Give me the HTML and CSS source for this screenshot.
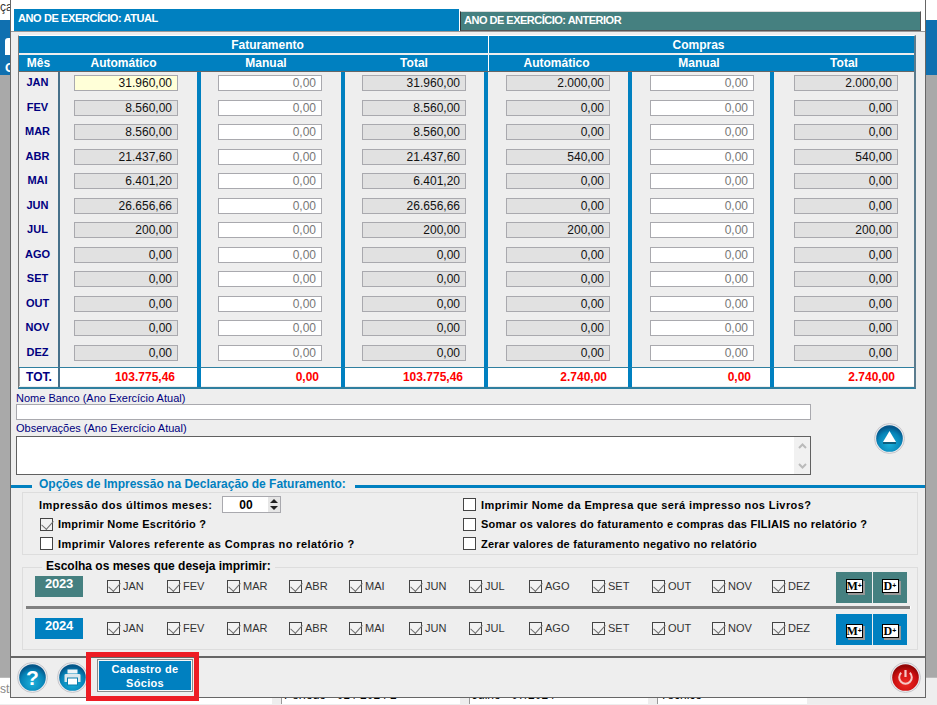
FILE: index.html
```html
<!DOCTYPE html>
<html lang="pt-BR">
<head>
<meta charset="utf-8">
<title>Declaração de Faturamento</title>
<link rel="stylesheet" href="styles.css">
</head>
<body>
<div class="desk">
  <div class="d-white">ça</div>
  <div class="d-blue"><span class="d-user"></span><span class="d-g">G</span></div>
  <div class="d-right"></div>
  <div class="d-bottom">
    <div class="d-left">str</div>
    <div class="d-f f1">Período - 01 / 2024 2</div>
    <div class="d-f f2">Julho - 07/2024</div>
    <div class="d-f f3">Técnico</div>
  </div>
</div>

<main class="win">
  <div class="tabs">
    <div class="tab-a">ANO DE EXERCÍCIO: ATUAL</div>
    <div class="tab-b">ANO DE EXERCÍCIO: ANTERIOR</div>
  </div>

  <section class="frame">
    <div class="hd1">
      <div class="hf">Faturamento</div>
      <div class="hc">Compras</div>
    </div>
    <div class="hd2">
      <div>Mês</div><div class="h2">Automático</div><div class="h3">Manual</div><div class="h4">Total</div><div class="h5">Automático</div><div class="h6">Manual</div><div class="h7">Total</div>
    </div>
    <div class="grid">
      <div class="mes">JAN</div><div class="cell c2"><div class="fld yl">31.960,00</div></div><div class="cell c3"><div class="fld ed">0,00</div></div><div class="cell c4"><div class="fld">31.960,00</div></div><div class="cell c5"><div class="fld">2.000,00</div></div><div class="cell c6"><div class="fld ed">0,00</div></div><div class="cell c7"><div class="fld">2.000,00</div></div>
      <div class="mes">FEV</div><div class="cell c2"><div class="fld">8.560,00</div></div><div class="cell c3"><div class="fld ed">0,00</div></div><div class="cell c4"><div class="fld">8.560,00</div></div><div class="cell c5"><div class="fld">0,00</div></div><div class="cell c6"><div class="fld ed">0,00</div></div><div class="cell c7"><div class="fld">0,00</div></div>
      <div class="mes">MAR</div><div class="cell c2"><div class="fld">8.560,00</div></div><div class="cell c3"><div class="fld ed">0,00</div></div><div class="cell c4"><div class="fld">8.560,00</div></div><div class="cell c5"><div class="fld">0,00</div></div><div class="cell c6"><div class="fld ed">0,00</div></div><div class="cell c7"><div class="fld">0,00</div></div>
      <div class="mes">ABR</div><div class="cell c2"><div class="fld">21.437,60</div></div><div class="cell c3"><div class="fld ed">0,00</div></div><div class="cell c4"><div class="fld">21.437,60</div></div><div class="cell c5"><div class="fld">540,00</div></div><div class="cell c6"><div class="fld ed">0,00</div></div><div class="cell c7"><div class="fld">540,00</div></div>
      <div class="mes">MAI</div><div class="cell c2"><div class="fld">6.401,20</div></div><div class="cell c3"><div class="fld ed">0,00</div></div><div class="cell c4"><div class="fld">6.401,20</div></div><div class="cell c5"><div class="fld">0,00</div></div><div class="cell c6"><div class="fld ed">0,00</div></div><div class="cell c7"><div class="fld">0,00</div></div>
      <div class="mes">JUN</div><div class="cell c2"><div class="fld">26.656,66</div></div><div class="cell c3"><div class="fld ed">0,00</div></div><div class="cell c4"><div class="fld">26.656,66</div></div><div class="cell c5"><div class="fld">0,00</div></div><div class="cell c6"><div class="fld ed">0,00</div></div><div class="cell c7"><div class="fld">0,00</div></div>
      <div class="mes">JUL</div><div class="cell c2"><div class="fld">200,00</div></div><div class="cell c3"><div class="fld ed">0,00</div></div><div class="cell c4"><div class="fld">200,00</div></div><div class="cell c5"><div class="fld">200,00</div></div><div class="cell c6"><div class="fld ed">0,00</div></div><div class="cell c7"><div class="fld">200,00</div></div>
      <div class="mes">AGO</div><div class="cell c2"><div class="fld">0,00</div></div><div class="cell c3"><div class="fld ed">0,00</div></div><div class="cell c4"><div class="fld">0,00</div></div><div class="cell c5"><div class="fld">0,00</div></div><div class="cell c6"><div class="fld ed">0,00</div></div><div class="cell c7"><div class="fld">0,00</div></div>
      <div class="mes">SET</div><div class="cell c2"><div class="fld">0,00</div></div><div class="cell c3"><div class="fld ed">0,00</div></div><div class="cell c4"><div class="fld">0,00</div></div><div class="cell c5"><div class="fld">0,00</div></div><div class="cell c6"><div class="fld ed">0,00</div></div><div class="cell c7"><div class="fld">0,00</div></div>
      <div class="mes">OUT</div><div class="cell c2"><div class="fld">0,00</div></div><div class="cell c3"><div class="fld ed">0,00</div></div><div class="cell c4"><div class="fld">0,00</div></div><div class="cell c5"><div class="fld">0,00</div></div><div class="cell c6"><div class="fld ed">0,00</div></div><div class="cell c7"><div class="fld">0,00</div></div>
      <div class="mes">NOV</div><div class="cell c2"><div class="fld">0,00</div></div><div class="cell c3"><div class="fld ed">0,00</div></div><div class="cell c4"><div class="fld">0,00</div></div><div class="cell c5"><div class="fld">0,00</div></div><div class="cell c6"><div class="fld ed">0,00</div></div><div class="cell c7"><div class="fld">0,00</div></div>
      <div class="mes">DEZ</div><div class="cell c2"><div class="fld">0,00</div></div><div class="cell c3"><div class="fld ed">0,00</div></div><div class="cell c4"><div class="fld">0,00</div></div><div class="cell c5"><div class="fld">0,00</div></div><div class="cell c6"><div class="fld ed">0,00</div></div><div class="cell c7"><div class="fld">0,00</div></div>
    </div>
    <div class="grid totals">
      <div class="mes tot"><span>TOT.</span></div>
      <div class="cell c2"><div class="tv">103.775,46</div></div><div class="cell c3"><div class="tv">0,00</div></div><div class="cell c4"><div class="tv">103.775,46</div></div><div class="cell c5"><div class="tv">2.740,00</div></div><div class="cell c6"><div class="tv">0,00</div></div><div class="cell c7"><div class="tv">2.740,00</div></div>
    </div>
  </section>

  <section class="notes">
    <div class="notes-l">
      <div class="lbl">Nome Banco (Ano Exercício Atual)</div>
      <div class="line"></div>
      <div class="lbl lbl2">Observações (Ano Exercício Atual)</div>
      <div class="area">
        <div class="sb">
          <svg width="9" height="6" viewBox="0 0 9 6"><path d="M1 5 L4.5 1.5 L8 5" fill="none" stroke="#bbb" stroke-width="2"/></svg>
          <svg width="9" height="6" viewBox="0 0 9 6"><path d="M1 1 L4.5 4.5 L8 1" fill="none" stroke="#bbb" stroke-width="2"/></svg>
        </div>
      </div>
    </div>
    <svg class="round up" width="31" height="31" viewBox="0 0 31 31">
      <defs><radialGradient id="gb" cx="50%" cy="70%" r="62%"><stop offset="0" stop-color="#1cb0da"/><stop offset="0.7" stop-color="#0684b8"/><stop offset="1" stop-color="#04578a"/></radialGradient></defs>
      <circle cx="15.5" cy="15.5" r="15" fill="#e8e8ec" stroke="#c8c8cc"/>
      <circle cx="15.5" cy="15.5" r="13.3" fill="url(#gb)"/>
      <path d="M15.5 8 L22 19 H9 Z" fill="#fff"/>
      <rect x="9" y="19" width="13" height="2" fill="#0c5f80"/>
    </svg>
  </section>

  <div class="opt-head"><span class="rule r1"></span><h2>Opções de Impressão na Declaração de Faturamento:</h2><span class="rule r2"></span></div>

  <section class="opts">
    <div class="opt lm">Impressão dos últimos meses:<div class="spin"><span>00</span><i class="arrows"></i></div></div>
    <label class="opt rt wide"><i class="ck"></i>Imprimir Nome da Empresa que será impresso nos Livros?</label>
    <label class="opt"><i class="ck on"></i>Imprimir Nome Escritório ?</label>
    <label class="opt rt"><i class="ck"></i>Somar os valores do faturamento e compras das FILIAIS no relatório ?</label>
    <label class="opt wide"><i class="ck"></i>Imprimir Valores referente as Compras no relatório ?</label>
    <label class="opt rt"><i class="ck"></i>Zerar valores de faturamento negativo no relatório</label>
  </section>

  <section class="group">
    <div class="g-legend">Escolha os meses que deseja imprimir:</div>
    <div class="yr y1">
      <div class="chip teal">2023</div>
      <div class="months">
        <label class="m"><i class="ck on"></i>JAN</label><label class="m"><i class="ck on"></i>FEV</label><label class="m w"><i class="ck on"></i>MAR</label><label class="m"><i class="ck on"></i>ABR</label><label class="m"><i class="ck on"></i>MAI</label><label class="m"><i class="ck on"></i>JUN</label><label class="m"><i class="ck on"></i>JUL</label><label class="m x"><i class="ck on"></i>AGO</label><label class="m"><i class="ck on"></i>SET</label><label class="m"><i class="ck on"></i>OUT</label><label class="m"><i class="ck on"></i>NOV</label><label class="m"><i class="ck on"></i>DEZ</label>
      </div>
      <div class="mbtns"><div class="mb teal"><span class="mi">M<b>+</b></span></div><div class="mb teal"><span class="mi d">D<b>+</b></span></div></div>
    </div>
    <div class="sep"></div>
    <div class="yr y2">
      <div class="chip blue">2024</div>
      <div class="months">
        <label class="m"><i class="ck on"></i>JAN</label><label class="m"><i class="ck on"></i>FEV</label><label class="m w"><i class="ck on"></i>MAR</label><label class="m"><i class="ck on"></i>ABR</label><label class="m"><i class="ck on"></i>MAI</label><label class="m"><i class="ck on"></i>JUN</label><label class="m"><i class="ck on"></i>JUL</label><label class="m x"><i class="ck on"></i>AGO</label><label class="m"><i class="ck on"></i>SET</label><label class="m"><i class="ck on"></i>OUT</label><label class="m"><i class="ck on"></i>NOV</label><label class="m"><i class="ck on"></i>DEZ</label>
      </div>
      <div class="mbtns"><div class="mb blue"><span class="mi">M<b>+</b></span></div><div class="mb blue"><span class="mi d">D<b>+</b></span></div></div>
    </div>
  </section>

  <footer class="foot">
    <div class="round hlp">
      <svg width="31" height="31" viewBox="0 0 31 31">
        <circle cx="15.5" cy="15.5" r="15" fill="#e8e8ec" stroke="#c8c8cc"/>
        <circle cx="15.5" cy="15.5" r="13.3" fill="url(#gb)"/>
      </svg>
      <span>?</span>
    </div>
    <svg class="round prn" width="31" height="31" viewBox="0 0 31 31">
      <circle cx="15.5" cy="15.5" r="15" fill="#e8e8ec" stroke="#c8c8cc"/>
      <circle cx="15.5" cy="15.5" r="13.3" fill="url(#gb)"/>
      <rect x="10.5" y="7.5" width="10" height="4" fill="#eef4f7"/>
      <path d="M7.5 13 Q7.5 12 9 12 H22 Q23.5 12 23.5 13 V20 H7.5 Z" fill="#dbe7ec"/>
      <rect x="10.5" y="16" width="10" height="7" fill="#fff" stroke="#0a7fae"/>
    </svg>
    <button class="socios" type="button">Cadastro de<br>Sócios</button>
    <svg class="round pwr" width="31" height="31" viewBox="0 0 31 31">
      <defs><radialGradient id="gr" cx="50%" cy="70%" r="62%"><stop offset="0" stop-color="#ee2a24"/><stop offset="0.7" stop-color="#cc0f10"/><stop offset="1" stop-color="#950606"/></radialGradient></defs>
      <circle cx="15.5" cy="15.5" r="15" fill="#e8e8ec" stroke="#c8c8cc"/>
      <circle cx="15.5" cy="15.5" r="13.3" fill="url(#gr)"/>
      <path d="M11.2 10.8 A6.3 6.3 0 1 0 19.8 10.8" fill="none" stroke="#f6c9c6" stroke-width="2"/>
      <path d="M15.5 8 V15" stroke="#f6c9c6" stroke-width="2.2"/>
    </svg>
  </footer>
</main>
<div class="marker"></div>
</body>
</html>
```
FILE: styles.css
```css
* { box-sizing: border-box; }
html, body { margin: 0; padding: 0; }
body {
  position: relative;
  width: 937px;
  height: 705px;
  overflow: hidden;
  background: #a9a9a9;
  font-family: "Liberation Sans", Arial, sans-serif;
  font-size: 11px;
  color: #000;
}

/* Desktop behind the dialog */
.desk { position: absolute; inset: 0; }
.d-white { position: absolute; left: 0; top: 0; width: 12px; height: 20px; background: #fff; color: #333; font-size: 12px; line-height: 15px; white-space: nowrap; overflow: hidden; }
.d-blue { position: absolute; left: 0; top: 20px; width: 937px; height: 55px; background: #1070b0; }
.d-user { position: absolute; left: 5px; top: 18px; width: 8px; height: 17px; background: #fff; border-radius: 3px 0 0 0; }
.d-g { position: absolute; left: 5px; top: 41px; color: #fff; font-size: 13px; font-weight: bold; line-height: 14px; }
.d-right { position: absolute; left: 925px; top: 0; width: 12px; height: 20px; background: #fff; }
.d-bottom { position: absolute; left: 0; top: 677px; width: 937px; height: 28px; background: #eee; border-top: 1px solid #bbb; }
.d-left { position: absolute; left: 0; top: 0; width: 272px; height: 26px; background: #fff; color: #888; font-size: 12px; line-height: 22px; }
.d-f { position: absolute; top: 10px; height: 16px; background: #fff; border-left: 1px solid #999; padding-left: 2px; font-size: 12px; line-height: 14px; }
.f1 { left: 281px; width: 179px; }
.f2 { left: 469px; width: 179px; }
.f3 { left: 657px; width: 150px; }

/* Dialog window */
.win {
  position: absolute;
  left: 10px;
  top: 0;
  width: 916px;
  height: 698px;
  display: flex;
  flex-direction: column;
  background: #eee;
  border: 1px solid #666;
  border-top: 0;
}
.tabs { display: flex; align-items: flex-start; height: 32px; padding: 9px 0 0 3px; background: #fff; border-bottom: 1px solid #999; flex: none; }
.tab-a { width: 445px; height: 22px; background: #0080c0; color: #fff; font-weight: bold; font-size: 11px; letter-spacing: -0.4px; line-height: 19px; padding-left: 4px; }
.tab-b { width: 461px; height: 20px; margin: 2px 0 0 1px; background: #458080; color: #fff; font-weight: bold; font-size: 11px; letter-spacing: -0.5px; line-height: 17px; padding-left: 3px; border: 1px solid; border-color: #ddd #555 #555 #333; }

/* Table */
.frame { width: 898px; margin: 3px 0 0 7px; flex: none; border-left: 1px solid #777; border-right: 2px solid #5b7c8e; border-bottom: 2px solid #2f7f9f; border-top: 1px solid #fff; }
.hd1, .hd2 { display: flex; color: #fff; font-size: 12px; font-weight: bold; background: #0080c0; }
.hd1 { height: 19px; line-height: 18px; border-bottom: 2px solid #eee; }
.hd2 { height: 17px; line-height: 17px; border-bottom: 1px solid #666; }
.hf { width: 470px; border-right: 1px solid #fff; text-align: center; padding-left: 28px; }
.hc { flex: 1; text-align: center; padding-right: 6px; }
.hd2 > div { text-align: center; flex: none; }
.hd2 > div:nth-child(1) { width: 41px; padding-right: 2px; }
.h2 { width: 137px; padding-right: 10px; }
.h3 { width: 144px; padding-right: 6px; }
.h4 { width: 148px; border-right: 1px solid #fff; padding-right: 1px; }
.h5 { width: 139px; padding-right: 4px; }
.h6 { width: 142px; }
.h7 { width: 144px; padding-left: 4px; }

.grid { display: grid; grid-template-columns: 41px 137px 144px 143px 144px 142px 144px; grid-auto-rows: 24.55px; }
.totals { grid-auto-rows: 20.4px; }
.mes { border-right: 2px solid #46708a; color: #000080; font-weight: bold; font-size: 11px; line-height: 12px; text-align: center; padding: 4px 2px 0 0; background: #eee; }
.cell { padding-top: 3px; background: #eee; }
.c2 { padding-left: 14px; }
.c3, .c4 { border-left: 4px solid #0080c0; padding-left: 17px; }
.c5, .c6 { border-left: 4px solid #0080c0; padding-left: 18px; }
.c7 { border-left: 4px solid #0080c0; padding-left: 20px; }
.fld { width: 104px; height: 16px; background: #e1e1e1; border: 1px solid #a9a9ae; font-size: 12px; line-height: 14px; text-align: right; padding-right: 5px; color: #111; }
.fld.ed { background: #fff; color: #777; }
.fld.yl { background: #ffffd8; }
.totals .cell { padding-top: 0; border-top: 1px solid #2f7f9f; background: linear-gradient(#fff 18px, #eee 18px); }
.totals .mes { border-top: 1px solid #2f7f9f; padding: 0; font-size: 12px; line-height: 18px; }
.tot span { display: block; width: 39px; height: 18px; background: #fff; border-left: 1px solid #aaa; }
.tv { width: 104px; height: 18px; padding-right: 3px; font-size: 12px; line-height: 18px; font-weight: bold; color: #f00; text-align: right; }

/* Notes */
.notes { display: flex; align-items: flex-start; padding: 3px 0 0 5px; height: 88px; flex: none; }
.notes-l { width: 795px; flex: none; }
.lbl { color: #000080; font-size: 11px; line-height: 12px; height: 12px; }
.lbl2 { margin-top: 2px; height: 14px; line-height: 13px; }
.line { height: 16px; background: #fff; border: 1px solid #a9a9ae; }
.area { height: 39px; background: #fff; border: 1px solid #606060; display: flex; justify-content: flex-end; }
.sb { width: 16px; background: #f1f1f1; display: flex; flex-direction: column; align-items: center; justify-content: space-between; padding: 6px 0 5px; }
.sb svg { display: block; }
.round { display: block; flex: none; }
.up { margin: 31px 0 0 63px; }

/* Options */
.opt-head { display: flex; align-items: flex-start; height: 15px; flex: none; }
.opt-head h2 { margin: 0 9px 0 7px; color: #0080c0; font-size: 12px; line-height: 14px; font-weight: bold; white-space: nowrap; }
.rule { height: 3px; background: #0080c0; margin-top: 8px; }
.r1 { width: 21px; flex: none; }
.r2 { flex: 1; }
.opts { display: grid; grid-template-columns: 423px 1fr; grid-auto-rows: 19.5px; width: 896px; height: 63px; margin-left: 11px; padding: 2px 0 0 17px; border: 1px solid #ddd; flex: none; }
.opt { display: flex; align-items: center; font-size: 11px; font-weight: bold; letter-spacing: 0.25px; white-space: nowrap; }
.opt.wide { letter-spacing: 0.4px; }
.ck { position: relative; display: block; width: 13px; height: 13px; flex: none; background: #fff; border: 1px solid #444; margin-right: 5px; }
.ck.on { background: #f2f2f2; }
.ck.on::after { content: ""; position: absolute; left: 3px; top: -1px; width: 6px; height: 10px; border: solid #707070; border-width: 0 1.5px 1.5px 0; transform: rotate(42deg); }
.lm { margin-left: -1px; letter-spacing: 0.45px; }
.spin { display: flex; align-items: center; width: 59px; height: 17px; margin-left: 10px; background: #fff; border: 1px solid #a9a9ae; font-size: 12px; font-weight: bold; letter-spacing: 0; }
.spin span { width: 45px; text-align: center; }
.arrows { position: relative; width: 12px; height: 15px; background: #e6e6e6; }
.arrows::before, .arrows::after { content: ""; position: absolute; left: 2px; border: 4px solid transparent; }
.arrows::before { top: -2px; border-bottom-color: #222; }
.arrows::after { bottom: -2px; border-top-color: #222; }

/* Month group */
.group { position: relative; width: 896px; height: 83px; margin: 12px 0 0 11px; border: 1px solid #ddd; flex: none; }
.g-legend { position: absolute; left: 19px; top: -9px; background: #eee; padding: 0 4px; font-size: 12px; line-height: 14px; font-weight: bold; white-space: nowrap; }
.yr { display: flex; align-items: flex-start; padding-left: 12px; }
.y1 { height: 38px; padding-top: 4px; }
.y2 { height: 40px; padding-top: 5px; }
.chip { width: 48px; height: 21px; margin-top: 4px; color: #fff; font-size: 13px; letter-spacing: -0.2px; font-weight: bold; line-height: 15px; text-align: center; flex: none; }
.teal { background: #458080; }
.blue { background: #0080c0; }
.months { display: flex; margin: 8px 0 0 24px; flex: none; }
.m { display: flex; align-items: center; width: 60px; height: 13px; flex: none; color: #333; font-size: 11px; }
.m.w { width: 62px; }
.m.x { width: 63px; }
.m .ck { margin-right: 3px; }
.mbtns { display: flex; gap: 1px; margin-left: auto; margin-right: 10px; flex: none; }
.mb { width: 36px; height: 31px; display: flex; align-items: center; justify-content: center; padding-bottom: 2px; }
.mb + .mb { width: 34px; }
.y2 .mb { padding: 3px 0 0; }
.mi { display: block; width: 17px; height: 14px; background: #fff; border: 1px solid #000; box-shadow: 2px 2px 0 #999; font-family: "Liberation Serif", serif; font-weight: bold; font-size: 12px; line-height: 12px; color: #000; white-space: nowrap; overflow: hidden; text-align: center; }
.mi b { font-family: "Liberation Sans", sans-serif; font-size: 7px; vertical-align: 2px; }
.sep { width: 885px; height: 3px; margin-left: 3px; background: #808080; border-right: 1px solid #fff; }

/* Footer */
.foot { display: flex; align-items: center; height: 41px; margin-top: 6px; padding: 0 4px 0 6px; border-top: 2px solid #666; flex: none; }
.hlp { position: relative; width: 31px; height: 31px; }
.hlp svg { display: block; }
.hlp span { position: absolute; inset: 0; color: #fff; font-size: 21px; font-weight: bold; line-height: 31px; text-align: center; }
.prn { margin-left: 9px; }
.socios { width: 96px; height: 33px; margin: -3px 0 0 9px; padding: 1px 0 0; background: #0080c0; border: 1px solid #8a8a8a; box-shadow: inset 0 0 0 1px #f6f6f6; color: #fff; font-family: "Liberation Sans", Arial, sans-serif; font-size: 11px; font-weight: bold; line-height: 14px; letter-spacing: 0.3px; }
.pwr { margin-left: auto; }
.marker { position: absolute; left: 86px; top: 652px; width: 113px; height: 49px; border: 5px solid #ed1c24; }
```
